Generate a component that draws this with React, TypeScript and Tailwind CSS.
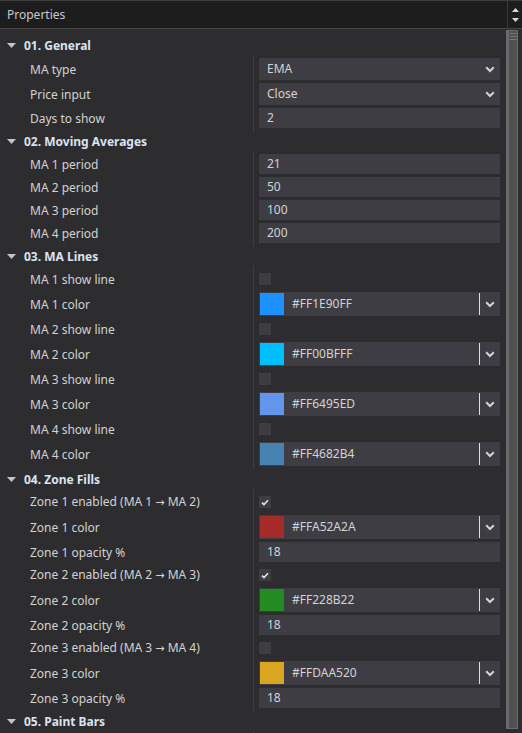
import React from 'react';

type Row =
  | { kind: 'select'; label: string; value: string }
  | { kind: 'text'; label: string; value: string }
  | { kind: 'check'; label: string; checked: boolean }
  | { kind: 'color'; label: string; hex: string; swatch: string };

type Section = { title: string; rows: Row[] };

const sections: Section[] = [
  {
    title: '01. General',
    rows: [
      { kind: 'select', label: 'MA type', value: 'EMA' },
      { kind: 'select', label: 'Price input', value: 'Close' },
      { kind: 'text', label: 'Days to show', value: '2' },
    ],
  },
  {
    title: '02. Moving Averages',
    rows: [
      { kind: 'text', label: 'MA 1 period', value: '21' },
      { kind: 'text', label: 'MA 2 period', value: '50' },
      { kind: 'text', label: 'MA 3 period', value: '100' },
      { kind: 'text', label: 'MA 4 period', value: '200' },
    ],
  },
  {
    title: '03. MA Lines',
    rows: [
      { kind: 'check', label: 'MA 1 show line', checked: false },
      { kind: 'color', label: 'MA 1 color', hex: '#FF1E90FF', swatch: '#1E90FF' },
      { kind: 'check', label: 'MA 2 show line', checked: false },
      { kind: 'color', label: 'MA 2 color', hex: '#FF00BFFF', swatch: '#00BFFF' },
      { kind: 'check', label: 'MA 3 show line', checked: false },
      { kind: 'color', label: 'MA 3 color', hex: '#FF6495ED', swatch: '#6495ED' },
      { kind: 'check', label: 'MA 4 show line', checked: false },
      { kind: 'color', label: 'MA 4 color', hex: '#FF4682B4', swatch: '#4682B4' },
    ],
  },
  {
    title: '04. Zone Fills',
    rows: [
      { kind: 'check', label: 'Zone 1 enabled (MA 1 → MA 2)', checked: true },
      { kind: 'color', label: 'Zone 1 color', hex: '#FFA52A2A', swatch: '#A52A2A' },
      { kind: 'text', label: 'Zone 1 opacity %', value: '18' },
      { kind: 'check', label: 'Zone 2 enabled (MA 2 → MA 3)', checked: true },
      { kind: 'color', label: 'Zone 2 color', hex: '#FF228B22', swatch: '#228B22' },
      { kind: 'text', label: 'Zone 2 opacity %', value: '18' },
      { kind: 'check', label: 'Zone 3 enabled (MA 3 → MA 4)', checked: false },
      { kind: 'color', label: 'Zone 3 color', hex: '#FFDAA520', swatch: '#DAA520' },
      { kind: 'text', label: 'Zone 3 opacity %', value: '18' },
    ],
  },
  { title: '05. Paint Bars', rows: [] },
];

const rowHeight = (r: Row) =>
  r.kind === 'select' ? 'h-[22px]' : r.kind === 'color' ? 'h-[24px]' : 'h-[20px]';

// arrows render oddly in Noto Sans, so give them their own font
const Label: React.FC<{ text: string }> = ({ text }) => {
  const parts = text.split('→');
  return (
    <span className="whitespace-pre pt-[1px]">
      {parts.map((p, i) => (
        <React.Fragment key={i}>
          {i > 0 && (
            <span className="text-[11px]" style={{ fontFamily: '"DejaVu Sans", sans-serif' }}>
              →
            </span>
          )}
          {p}
        </React.Fragment>
      ))}
    </span>
  );
};

const Chevron = () => (
  <svg width="10" height="7" viewBox="0 0 10 7" className="shrink-0">
    <path d="M1.2 1.3 L5 5 L8.8 1.3" fill="none" stroke="#d4d4d4" strokeWidth="2" />
  </svg>
);

const Control: React.FC<{ row: Row }> = ({ row }) => {
  if (row.kind === 'select') {
    return (
      <div className="h-[22px] bg-[#3e3d44] flex items-center justify-between pl-[8px] pr-[5px]">
        <span>{row.value}</span>
        <Chevron />
      </div>
    );
  }
  if (row.kind === 'text') {
    return (
      <div className="h-[20px] bg-[#3e3d44] flex items-center pl-[8px]">
        <span>{row.value}</span>
      </div>
    );
  }
  if (row.kind === 'check') {
    return (
      <div className="h-[20px] flex items-center">
        <div className="w-[12px] h-[12px] bg-[#3e3d44] flex items-center justify-center">
          {row.checked && (
            <svg width="8" height="7" viewBox="0 0 8 7">
              <path d="M1 3.6 L3 5.5 L7 1.2" fill="none" stroke="#e6e6e6" strokeWidth="1.6" />
            </svg>
          )}
        </div>
      </div>
    );
  }
  return (
    <div className="h-[24px] bg-[#3e3d44] flex items-center">
      <div className="ml-[1px] w-[24px] h-[22px]" style={{ backgroundColor: row.swatch }} />
      <span className="ml-[8px] flex-1">{row.hex}</span>
      <div className="w-[1px] h-[22px] bg-[#dcdcdc]" />
      <div className="w-[20px] flex items-center justify-center">
        <Chevron />
      </div>
    </div>
  );
};

export default function App() {
  return (
    <div
      className="w-[522px] h-[733px] overflow-hidden bg-[#2d2d30] text-[12px] text-[#d2d2d2] flex flex-col border-t border-[#3c3c3c]"
      style={{ fontFamily: '"Noto Sans", "Open Sans", sans-serif' }}
    >
      {/* Title bar */}
      <div className="h-[28px] shrink-0 flex bg-[#1d1d1e] border-b border-[#454545]">
        <div className="flex-1 flex items-center pl-[7px] text-[#c9c9c9]">Properties</div>
        <div className="w-[15px] border-l border-[#3a3a3a] flex flex-col items-center justify-center gap-[6px]">
          <svg width="7" height="4" viewBox="0 0 7 4">
            <path d="M0 4 L3.5 0 L7 4 Z" fill="#d8d8d8" />
          </svg>
          <svg width="7" height="4" viewBox="0 0 7 4">
            <path d="M0 0 L3.5 4 L7 0 Z" fill="#d8d8d8" />
          </svg>
        </div>
      </div>

      <div className="flex-1 flex min-h-0">
        {/* Property grid */}
        <div className="w-[506px] flex flex-col pt-[6px]">
          {sections.map((s) => (
            <div key={s.title} className="flex flex-col shrink-0">
              <div className="h-[20px] flex items-center">
                <svg width="9" height="5" viewBox="0 0 9 5" className="ml-[7px]">
                  <path d="M0 0 L9 0 L4.5 5 Z" fill="#c4c4c4" />
                </svg>
                <span className="ml-[8px] pt-[1px] font-bold text-[#dbe3ee]">{s.title}</span>
              </div>
              <div className="flex min-h-[20px]">
                <div className="w-[253px] shrink-0 flex flex-col gap-[3px] py-[3px] pl-[30px]">
                  {s.rows.map((r) => (
                    <div key={r.label} className={`${rowHeight(r)} flex items-center`}>
                      <Label text={r.label} />
                    </div>
                  ))}
                </div>
                <div className="flex-1 border-l border-[#3d3d41] flex flex-col gap-[3px] py-[3px] pl-[5px] pr-[6px]">
                  {s.rows.map((r) => (
                    <Control key={r.label} row={r} />
                  ))}
                </div>
              </div>
            </div>
          ))}
        </div>

        {/* Scrollbar */}
        <div className="w-[16px] shrink-0 flex pt-[1px] pb-[4px]">
          <div className="w-[12px] h-full bg-[#515151] border border-[#6c6c6c] border-l-[3px] border-l-[#6a6a6a] flex flex-col items-center pt-[2px] gap-[2px]">
            <div className="w-[7px] h-[1px] bg-[#777]" />
            <div className="w-[7px] h-[1px] bg-[#777]" />
            <div className="w-[7px] h-[1px] bg-[#777]" />
          </div>
        </div>
      </div>
    </div>
  );
}
